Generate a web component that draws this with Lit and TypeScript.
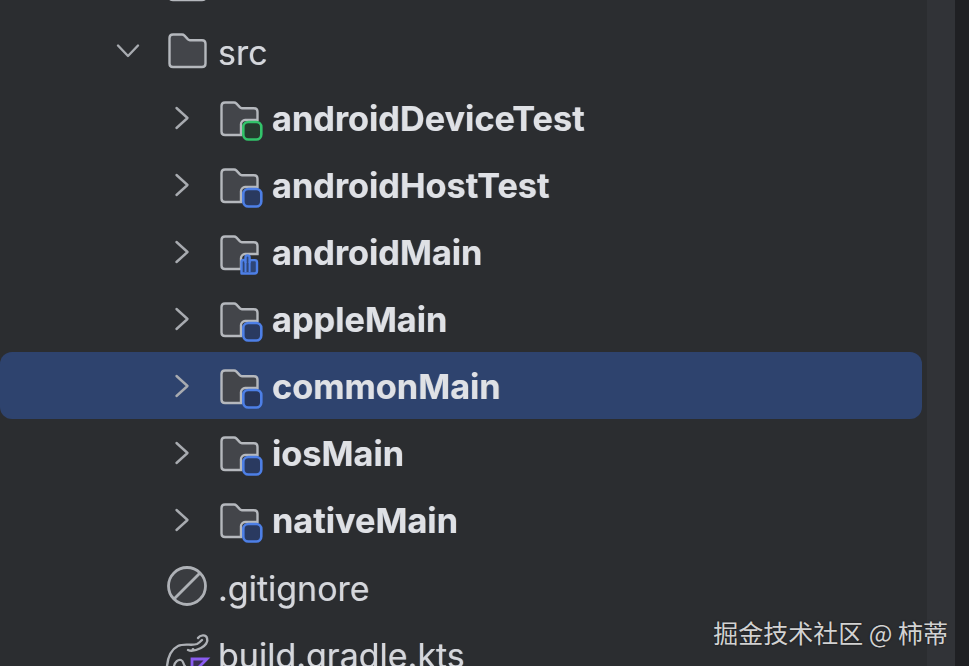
import { LitElement, html, css, svg } from "lit";
import { customElement } from "lit/decorators.js";

type Kind = "folder" | "module" | "ignore" | "gradle";
interface Row {
  name: string;
  depth: 0 | 1;
  open?: boolean;
  kind: Kind;
  badge?: "green" | "blue" | "lib";
  selected?: boolean;
  noChevron?: boolean;
}

const rows: Row[] = [
  { name: "", depth: 0, kind: "folder", noChevron: true },
  { name: "src", depth: 0, open: true, kind: "folder" },
  { name: "androidDeviceTest", depth: 1, kind: "module", badge: "green" },
  { name: "androidHostTest", depth: 1, kind: "module", badge: "blue" },
  { name: "androidMain", depth: 1, kind: "module", badge: "lib" },
  { name: "appleMain", depth: 1, kind: "module", badge: "blue" },
  { name: "commonMain", depth: 1, kind: "module", badge: "blue", selected: true },
  { name: "iosMain", depth: 1, kind: "module", badge: "blue" },
  { name: "nativeMain", depth: 1, kind: "module", badge: "blue" },
  { name: ".gitignore", depth: 0, kind: "ignore", noChevron: true },
  { name: "build.gradle.kts", depth: 0, kind: "gradle", noChevron: true },
];

const folderPath =
  "M5 1.500h9c1 0 1.800.4 2.500 1.100l3.500 3.800c.5.5 1.100.8 1.900.8H34c2 0 3.500 1.500 3.500 3.500V30.500c0 2-1.500 3.500-3.500 3.500H5c-2 0-3.500-1.500-3.500-3.500V5C1.500 3 3 1.500 5 1.500Z";

function chevron(open?: boolean) {
  return open
    ? html`<svg class="chev" width="24" height="16" viewBox="0 0 24 16"><path d="M2 2.500 12 13 22 2.500" fill="none" stroke="#a8abb0" stroke-width="2.400" stroke-linecap="round" stroke-linejoin="round"/></svg>`
    : html`<svg class="chev" width="16" height="24" viewBox="0 0 16 24"><path d="M2.500 2 13.500 12 2.500 22" fill="none" stroke="#a8abb0" stroke-width="2.400" stroke-linecap="round" stroke-linejoin="round"/></svg>`;
}

function badge(b: Row["badge"], selected?: boolean) {
  if (b === "lib") {
    return svg`<path d="M21.500 38.500V27c0-1.200.9-2 2-2s2 .8 2 2v-4.500c0-1.200.9-2.100 2-2.100s2.100.9 2.100 2.100V27c0-1.100.8-1.900 1.900-1.900h3.300c1.300 0 2.200 1 2.200 2.200V36c0 1.500-1 2.500-2.500 2.500H21.500Z" fill="#2e4677" stroke="#4d7fe6" stroke-width="2.400" stroke-linejoin="round"/>
    <path d="M25.500 27v10M29.600 27v10" stroke="#4d7fe6" stroke-width="2"/>`;
  }
  const green = b === "green";
  return svg`<rect x="23.300" y="21" width="18" height="17.500" rx="5"
    fill="${green ? "#253a2e" : selected ? "#27355a" : "#2a3a60"}"
    stroke="${green ? "#32c36a" : "#4d7fe6"}" stroke-width="2.600"/>`;
}

function icon(r: Row) {
  switch (r.kind) {
    case "folder":
      return html`<svg class="icon" width="42" height="36" viewBox="0 0 42 36"><path d=${folderPath} fill="#43454a" stroke="#b5b8bd" stroke-width="2.400"/></svg>`;
    case "module":
      return html`<svg class="icon" width="44" height="41" viewBox="0 0 44 41">
        <path d="M21 34H5c-2 0-3.500-1.500-3.500-3.500V5C1.500 3 3 1.500 5 1.500h9c1 0 1.800.4 2.500 1.100l3.500 3.800c.5.5 1.100.8 1.900.8H34c2 0 3.500 1.500 3.500 3.500V19H25c-2 0-4 2-4 4Z" fill="#43454a" stroke="#b5b8bd" stroke-width="2.400"/>
        ${badge(r.badge, r.selected)}
      </svg>`;
    case "ignore":
      return html`<svg class="icon" width="42" height="42" viewBox="0 0 42 42">
        <circle cx="19" cy="20" r="18.500" fill="#3a3c40" stroke="#aeb1b6" stroke-width="2.800"/>
        <path d="M6 33 32 7" stroke="#aeb1b6" stroke-width="2.800"/>
      </svg>`;
    default:
      return html`<svg class="icon" width="44" height="44" viewBox="0 0 44 44">
        <path d="M-1 34C0 24 4 17 10 14c6-3 14 0 19-2 2-1 4-3 5-4" fill="none" stroke="#aeb1b6" stroke-width="2.400" stroke-linecap="round"/>
        <path d="M30 6c2-3 8-4 9 0 1.500 4-2 8-6 10-4 2-9 4-13 2" fill="none" stroke="#aeb1b6" stroke-width="2.400" stroke-linecap="round"/>
        <path d="M6 34c1-4 4-7 7-6 3 1 2 5 4 6" fill="none" stroke="#aeb1b6" stroke-width="2.200" stroke-linecap="round"/>
        <circle cx="25" cy="17.500" r="1.400" fill="#aeb1b6"/>
        <path d="M24 27h15l-7 7 7 7H24Z" fill="#3a2f55" stroke="#8a5cf0" stroke-width="2.800"/>
      </svg>`;
  }
}

@customElement("app-root")
export class AppRoot extends LitElement {
  static styles = css`
    :host {
      display: block;
      width: 969px;
      height: 667px;
      overflow: hidden;
      position: relative;
      background: #ffffff;
      font-family: Inter, "Noto Sans", sans-serif;
    }
    .shell {
      height: 666px;
      display: flex;
      overflow: hidden;
      background: #2b2d30;
    }
    .tree {
      flex: 1;
      min-width: 0;
      margin-top: -50px;
      display: flex;
      flex-direction: column;
      filter: blur(0.5px);
    }
    .track {
      width: 28px;
      flex: none;
      background: #313337;
    }
    .gutter {
      width: 14px;
      flex: none;
      background: #1f2023;
    }
    .row {
      height: 67px;
      flex: none;
      width: 922px;
      display: flex;
      align-items: center;
      color: #dfe1e5;
      font-size: 34.3px;
      line-height: 40px;
      white-space: nowrap;
      border-radius: 0 12px 12px 0;
    }
    .row.selected {
      background: #2e436e;
      border-radius: 12px;
    }
    .cell {
      flex: none;
      display: flex;
      align-items: center;
    }
    .d0 .gutter-cell { width: 168px; padding-left: 116px; box-sizing: border-box; }
    .d1 .gutter-cell { width: 220px; padding-left: 174px; box-sizing: border-box; }
    .d0 .icon-cell { width: 50px; }
    .d1 .icon-cell { width: 52px; padding-top: 7px; box-sizing: border-box; }
    .label {
      text-shadow: -0.6px 0 rgba(110, 170, 255, 0.35), 0.6px 0 rgba(255, 190, 120, 0.3);
    }
    .d1 .label { font-weight: 700; padding-top: 2px; }
    .d0 .label { font-weight: 400; font-size: 34px; color: #d5d7db; padding-top: 4px; }
    .icon, .chev { display: block; flex: none; overflow: visible; }
    .mark {
      position: absolute;
      right: 21px;
      bottom: 19px;
      color: #d2d2d2;
      font-family: "Noto Sans CJK SC", sans-serif;
      font-size: 25px;
      line-height: 32px;
      white-space: nowrap;
      text-shadow: 0 0 2px rgba(0, 0, 0, 0.6);
    }
  `;

  render() {
    return html`
      <div class="shell">
        <div class="tree">
          ${rows.map(
            (r) => html`
              <div class="row d${r.depth} ${r.selected ? "selected" : ""}">
                <div class="cell gutter-cell">${r.noChevron ? "" : chevron(r.open)}</div>
                <div class="cell icon-cell">${icon(r)}</div>
                <span class="label">${r.name}</span>
              </div>
            `
          )}
        </div>
        <div class="track"></div>
        <div class="gutter"></div>
      </div>
      <div class="mark">掘金技术社区 @ 柿蒂</div>
    `;
  }
}
